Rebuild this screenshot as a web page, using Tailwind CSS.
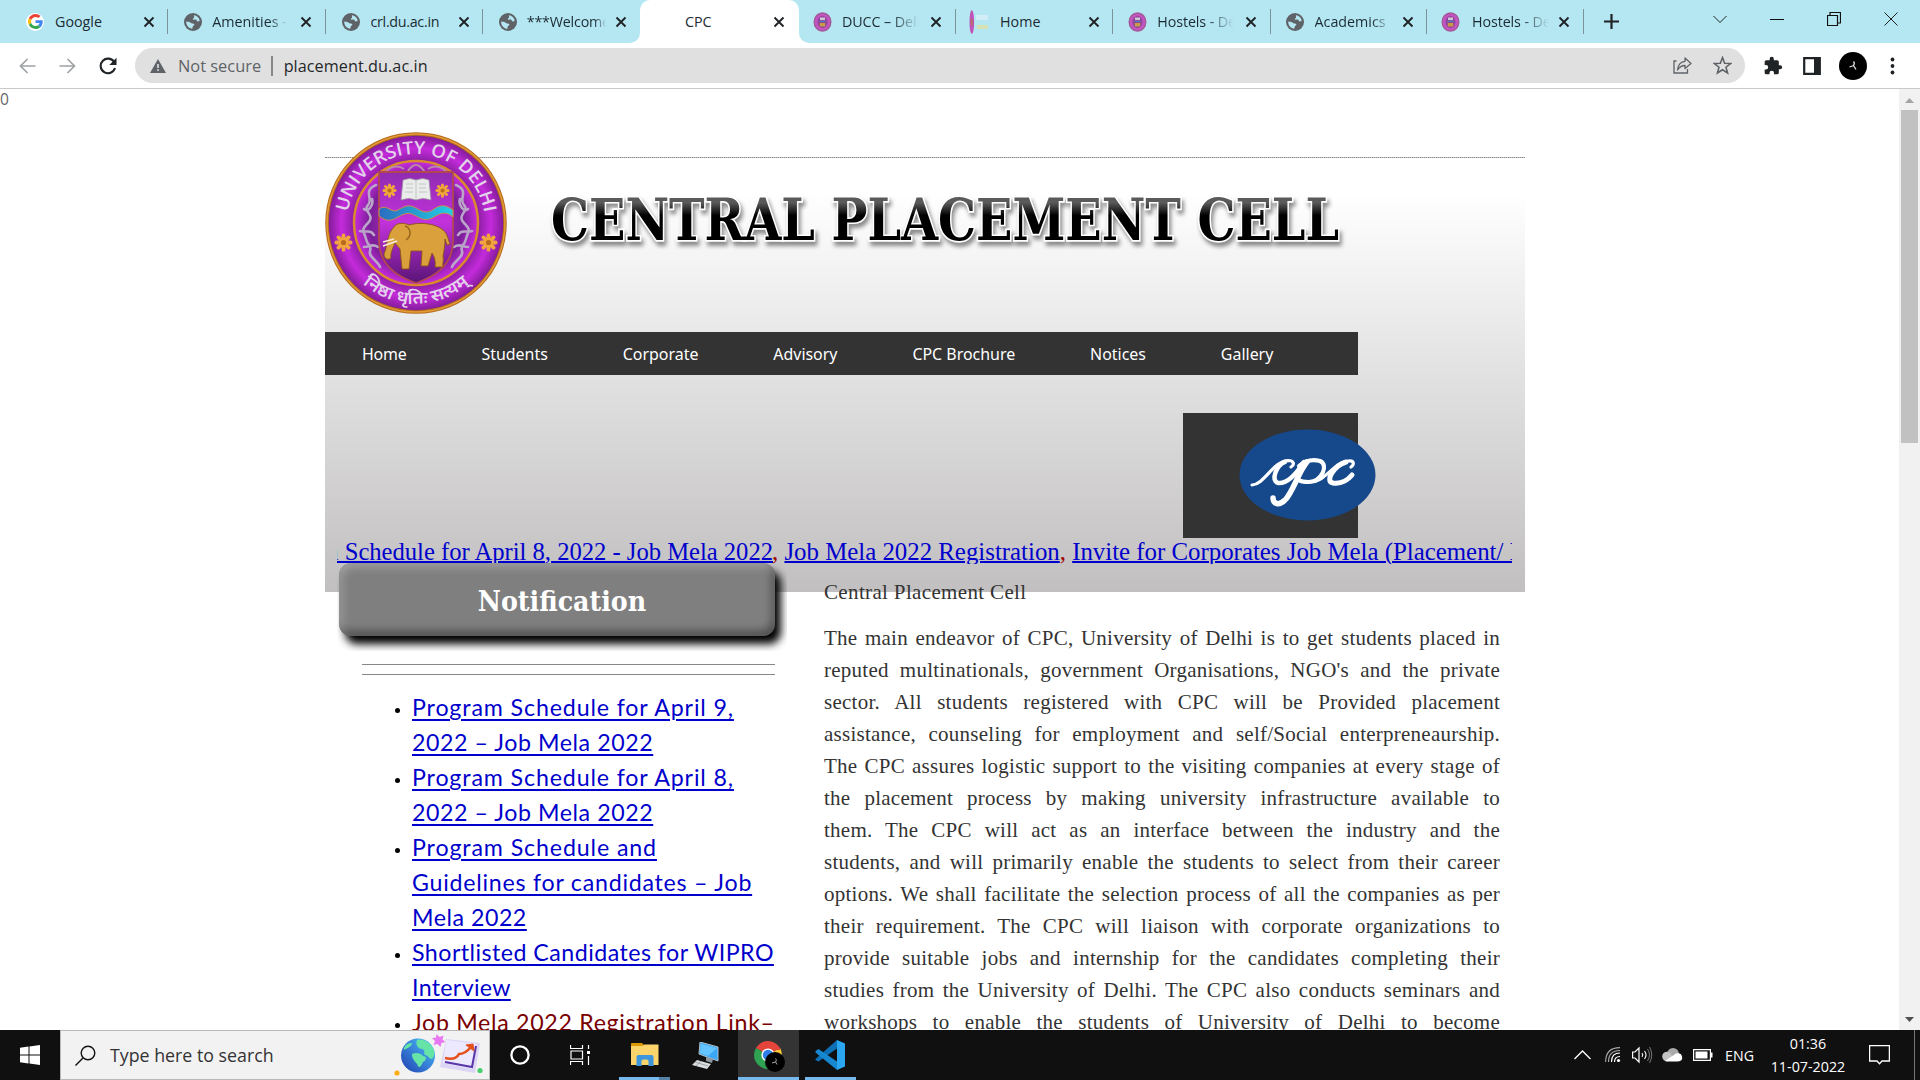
<!DOCTYPE html>
<html lang="en">
<head>
<meta charset="utf-8">
<title>CPC</title>
<script src="https://cdn.jsdelivr.net/npm/@tailwindcss/browser@4"></script>
</head>
<body class="w-[1920px] h-[1080px] overflow-hidden flex flex-col bg-white font-['Open_Sans',sans-serif]">

<!-- shared symbols -->
<svg class="hidden">
  <symbol id="x" viewBox="0 0 12 12"><path d="M1.500 1.500l9 9M10.500 1.500l-9 9" stroke="#1f2326" stroke-width="1.900" fill="none"/></symbol>
  <symbol id="globe" viewBox="0 0 18 18"><circle cx="9" cy="9" r="9" fill="#5f6368"/><path d="M10 2.200c2.800.4 5.200 2.500 5.700 5.300-.7 1-1.700 1.200-2.400.8-.8-.4-.6-1.400-1.500-1.700-.9-.2-1.500.4-2.400.1-.8-.3-.6-1.200 0-1.500.8-.4.9-.7.700-1.300-.1-.6-.3-1.100-.1-1.700zM2.200 8.500c1.800.2 3.400.3 4.800 1.500.7.600 1.700.5 2.600.7 1 .3.900 1.300.2 1.900-.7.500-1.100.7-1.200 1.500l-.2 1.700C5 15.500 2 12.500 2.200 8.500z" fill="#b5e7f2"/></symbol>
  <symbol id="du" viewBox="0 0 18 20"><ellipse cx="9" cy="10" rx="9" ry="9.800" fill="#a15a94"/><ellipse cx="9" cy="10" rx="7.800" ry="8.600" fill="#c254c0"/><ellipse cx="9" cy="10" rx="5" ry="6" fill="#8f4599"/><path d="M6.500 5.500h5v2.500h-5z" fill="#d5c3d8"/><path d="M6 8.700h6v1.200H6z" fill="#4b86bd"/><path d="M6.300 11h5.400v3.500H6.300z" fill="#c99a46"/></symbol>
  <symbol id="flower" viewBox="-8 -8 16 16"><g stroke="#f0a63c" stroke-width="3.200" stroke-linecap="round"><path d="M0-6V6M-6 0H6M-4.300-4.300L4.300 4.300M4.300-4.300L-4.300 4.300"/></g><circle r="2.200" fill="#b86a1e"/></symbol>
</svg>

<!-- tab strip -->
<div class="h-[43px] shrink-0 bg-[#b5e7f2] flex items-center pl-[11px] text-[14.300px] text-[#1c2b33]">
  <div class="w-[157.250px] h-full flex items-center pl-[15px] relative">
    <span class="size-[18px] rounded-full bg-white flex items-center justify-center"><svg class="size-[15px]" viewBox="0 0 48 48"><path fill="#EA4335" d="M24 9.500c3.540 0 6.710 1.220 9.210 3.600l6.850-6.850C35.900 2.380 30.470 0 24 0 14.620 0 6.510 5.380 2.560 13.220l7.980 6.190C12.430 13.720 17.740 9.500 24 9.500z"/><path fill="#4285F4" d="M46.980 24.550c0-1.570-.15-3.090-.38-4.550H24v9.020h12.940c-.58 2.960-2.260 5.480-4.780 7.180l7.730 6c4.510-4.180 7.090-10.360 7.090-17.650z"/><path fill="#FBBC05" d="M10.530 28.590c-.48-1.450-.76-2.990-.76-4.590s.27-3.140.76-4.590l-7.980-6.190C.92 16.460 0 20.120 0 24c0 3.880.92 7.540 2.560 10.780l7.970-6.190z"/><path fill="#34A853" d="M24 48c6.480 0 11.930-2.130 15.890-5.810l-7.730-6c-2.150 1.450-4.920 2.300-8.160 2.300-6.260 0-11.570-4.220-13.470-9.910l-7.980 6.190C6.510 42.620 14.620 48 24 48z"/></svg></span>
    <span class="ml-[11px] w-[76px] whitespace-nowrap overflow-hidden">Google</span><svg class="ml-[12px] size-3"><use href="#x"/></svg>
    <i class="absolute right-0 top-[9px] w-px h-[25px] bg-[#7c939b]"></i>
  </div>
  <div class="w-[157.250px] h-full flex items-center pl-4 relative">
    <svg class="size-[18px]"><use href="#globe"/></svg>
    <span class="ml-[10px] w-[76px] whitespace-nowrap overflow-hidden mask-r-from-75% mask-r-to-100%">Amenities - D</span><svg class="ml-[12px] size-3"><use href="#x"/></svg>
    <i class="absolute right-0 top-[9px] w-px h-[25px] bg-[#7c939b]"></i>
  </div>
  <div class="w-[157.250px] h-full flex items-center pl-4 relative">
    <svg class="size-[18px]"><use href="#globe"/></svg>
    <span class="ml-[11px] w-[76px] whitespace-nowrap overflow-hidden tracking-[-0.300px]">crl.du.ac.in</span><svg class="ml-[11px] size-3"><use href="#x"/></svg>
    <i class="absolute right-0 top-[9px] w-px h-[25px] bg-[#7c939b]"></i>
  </div>
  <div class="w-[157.250px] h-full flex items-center pl-4">
    <svg class="size-[18px]"><use href="#globe"/></svg>
    <span class="ml-[10px] w-[79px] whitespace-nowrap overflow-hidden mask-r-from-85% mask-r-to-100% tracking-[-0.200px]">***Welcome t</span><svg class="ml-[9px] size-3"><use href="#x"/></svg>
  </div>
  <div class="w-[159px] h-full flex items-center pl-[45px] relative bg-white rounded-t-[10px]">
    <span class="w-[76px]">CPC</span><svg class="ml-[12px] size-3"><use href="#x"/></svg>
    <i class="absolute -left-[10px] bottom-0 size-[10px] bg-white"></i><i class="absolute -left-[10px] bottom-0 size-[10px] bg-[#b5e7f2] rounded-br-[10px]"></i>
    <i class="absolute -right-[10px] bottom-0 size-[10px] bg-white"></i><i class="absolute -right-[10px] bottom-0 size-[10px] bg-[#b5e7f2] rounded-bl-[10px]"></i>
  </div>
  <div class="w-[157px] h-full flex items-center pl-[14px] relative">
    <svg class="w-[19px] h-[20px]"><use href="#du"/></svg>
    <span class="ml-[10px] w-[77px] whitespace-nowrap overflow-hidden mask-r-from-65% mask-r-to-100% tracking-[-0.100px]">DUCC – Delh</span><svg class="ml-[11px] size-3"><use href="#x"/></svg>
    <i class="absolute right-0 top-[9px] w-px h-[25px] bg-[#7c939b]"></i>
  </div>
  <div class="w-[157.250px] h-full flex items-center pl-[13px] relative">
    <svg class="w-[20px] h-[24px]" viewBox="0 0 20 24"><ellipse cx="2.800" cy="12" rx="2.300" ry="12" fill="#c052b8"/><path d="M2 9h1.500v6H2z" fill="#b07a50"/><path d="M7 5h12v5H7z" fill="#d3edf6"/><path d="M8 15h11v4H8z" fill="#d8e3b4"/></svg>
    <span class="ml-[11px] w-[76px] whitespace-nowrap overflow-hidden">Home</span><svg class="ml-[12px] size-3"><use href="#x"/></svg>
    <i class="absolute right-0 top-[9px] w-px h-[25px] bg-[#7c939b]"></i>
  </div>
  <div class="w-[157.250px] h-full flex items-center pl-[15px] relative">
    <svg class="w-[19px] h-[20px]"><use href="#du"/></svg>
    <span class="ml-[10px] w-[77px] whitespace-nowrap overflow-hidden mask-r-from-65% mask-r-to-100% tracking-[-0.100px]">Hostels - Delh</span><svg class="ml-[11px] size-3"><use href="#x"/></svg>
    <i class="absolute right-0 top-[9px] w-px h-[25px] bg-[#7c939b]"></i>
  </div>
  <div class="w-[156.500px] h-full flex items-center pl-[15px] relative">
    <svg class="size-[18px]"><use href="#globe"/></svg>
    <span class="ml-[11px] w-[76px] whitespace-nowrap overflow-hidden mask-r-from-75% mask-r-to-100%">Academics -</span><svg class="ml-[11px] size-3"><use href="#x"/></svg>
    <i class="absolute right-0 top-[9px] w-px h-[25px] bg-[#7c939b]"></i>
  </div>
  <div class="w-[157px] h-full flex items-center pl-[14px] relative">
    <svg class="w-[19px] h-[20px]"><use href="#du"/></svg>
    <span class="ml-[12px] w-[77px] whitespace-nowrap overflow-hidden mask-r-from-65% mask-r-to-100% tracking-[-0.100px]">Hostels - Delh</span><svg class="ml-[9px] size-3"><use href="#x"/></svg>
    <i class="absolute right-0 top-[9px] w-px h-[25px] bg-[#7c939b]"></i>
  </div>
  <svg class="ml-[20px] w-[15px] h-[15px]" viewBox="0 0 15 15"><path d="M7.500 0v15M0 7.500h15" stroke="#1f2326" stroke-width="2.200"/></svg>
  <div class="ml-auto flex items-center gap-[43px] pr-[22px] h-full pb-[6px]">
    <svg class="w-[14px] h-[14px]" viewBox="0 0 14 14"><path d="M.5 4L7 10.500 13.500 4" stroke="#222" fill="none"/></svg>
    <svg class="w-[14px] h-[14px]" viewBox="0 0 14 14"><path d="M0 7.500h14" stroke="#111"/></svg>
    <svg class="w-[14px] h-[14px]" viewBox="0 0 14 14"><path d="M.5 3.500h10v10H.5zM3 3V.5h10.500V11H11" stroke="#111" fill="none" stroke-width="1.200"/></svg>
    <svg class="w-[14px] h-[14px]" viewBox="0 0 14 14"><path d="M.5.5l13 13M13.500.5l-13 13" stroke="#222"/></svg>
  </div>
</div>

<!-- toolbar -->
<div class="h-[46px] shrink-0 border-b border-[#c8cacc] flex items-center pl-[19px] pr-[25px] text-base">
  <svg class="w-[17px] h-[16px]" viewBox="0 0 17 16"><path d="M16.500 8H1.500M8.500 1L1.500 8l7 7" stroke="#9fa2a5" stroke-width="1.700" fill="none"/></svg>
  <svg class="ml-[23px] w-[17px] h-[16px]" viewBox="0 0 17 16"><path d="M.5 8h15M8.500 1l7 7-7 7" stroke="#9fa2a5" stroke-width="1.700" fill="none"/></svg>
  <svg class="ml-[23px] w-[18px] h-[18px]" viewBox="0 0 18 18"><path d="M15.300 5.200A7.300 7.300 0 1 0 16 11" stroke="#1f2326" stroke-width="2.100" fill="none"/><path d="M17.500.8v7.200h-7.200z" fill="#1f2326"/></svg>
  <div class="ml-[18px] w-[1610px] h-[35px] rounded-full bg-[#e0e0e0] flex items-center pl-[15px] pr-[13px] text-[#5f6368]">
    <svg class="w-[16px] h-[14px]" viewBox="0 0 16 14"><path d="M8 0l8 14H0z" fill="#5f6368"/><path d="M7.200 5h1.600v4H7.200zM7.200 10.300h1.600v1.600H7.200z" fill="#e0e0e0"/></svg>
    <span class="ml-3 text-[16.400px] pt-px">Not secure</span>
    <i class="ml-[10px] w-[1.500px] h-[20px] bg-[#85888b]"></i>
    <span class="ml-[11px] text-[#24272a] text-[16.200px] tracking-[0.060px] pt-px">placement.du.ac.in</span>
    <svg class="ml-auto w-[19px] h-[17px]" viewBox="0 0 19 17"><path d="M3.500 4H1v12h13.500v-4" stroke="#5f6368" stroke-width="1.300" fill="none"/><path d="M12 1l6 5.500-6 5V8.500C8.500 8.500 6.500 10 4.500 13c.5-5 3-8.300 7.500-8.700z" stroke="#5f6368" stroke-width="1.300" fill="none" stroke-linejoin="round"/></svg>
    <svg class="ml-[21px] w-[19px] h-[19px]" viewBox="0 0 24 24"><path d="M12 2l2.700 7.100 7.600.4-5.900 4.700 2 7.300L12 17.400l-6.400 4.100 2-7.300L1.700 9.500l7.600-.4z" fill="none" stroke="#5f6368" stroke-width="2"/></svg>
  </div>
  <svg class="ml-[18px] w-[20px] h-[20px]" viewBox="0 0 24 24"><path d="M20.500 11H19V7a2 2 0 0 0-2-2h-4V3.500a2.500 2.500 0 0 0-5 0V5H4a2 2 0 0 0-2 2v3.800h1.500a2.700 2.700 0 0 1 0 5.400H2V20a2 2 0 0 0 2 2h3.800v-1.500a2.700 2.700 0 0 1 5.400 0V22H17a2 2 0 0 0 2-2v-4h1.500a2.500 2.500 0 0 0 0-5z" fill="#1f2326"/></svg>
  <svg class="ml-[20px] w-[18px] h-[18px]" viewBox="0 0 18 18"><path d="M1.200 1.200h15.600v15.600H1.200z" fill="none" stroke="#1f2326" stroke-width="2.200"/><path d="M11 1h6v16h-6z" fill="#1f2326"/></svg>
  <svg class="ml-[18px] w-[28px] h-[28px]" viewBox="0 0 28 28"><circle cx="14" cy="14" r="14"/><path d="M14.500 9.500c1 1 1 2.500 0 4L17 17.500M14.500 13.500L10.500 15" stroke="#ddd" stroke-width="1.300" fill="none"/></svg>
  <svg class="ml-auto w-[5px] h-[18px]" viewBox="0 0 5 18"><g fill="#1f2326"><circle cx="2.500" cy="2.500" r="1.900"/><circle cx="2.500" cy="9" r="1.900"/><circle cx="2.500" cy="15.500" r="1.900"/></g></svg>
</div>

<!-- page viewport -->
<div class="h-[941px] shrink-0 flex overflow-hidden">
  <main class="w-[1899px] relative">
    <span class="absolute left-0 top-0 text-[15.500px] leading-[20px] text-[#666]">0</span>
    <div class="w-[1200px] ml-[325px] pt-[68px]">
      <header class="h-[435px] border-t border-dotted border-[#8a8a8a] bg-linear-to-b from-white from-8% to-[#c1bfc0] relative">
        <div class="h-[174px] flex">
          <svg class="-mt-[27px] -ml-px w-[184px] h-[184px] shrink-0 overflow-visible" viewBox="-92 -92 184 184">
            <defs>
              <radialGradient id="g1"><stop offset=".66" stop-color="#7d1b96"/><stop offset=".84" stop-color="#c42bdb"/><stop offset="1" stop-color="#7b1a92"/></radialGradient>
              <radialGradient id="g2"><stop offset="0" stop-color="#d63be8"/><stop offset=".75" stop-color="#7a1f98"/><stop offset="1" stop-color="#c92bdf"/></radialGradient>
              <linearGradient id="g3" x2="0" y2="1"><stop stop-color="#8f2bb0"/><stop offset=".45" stop-color="#c332dc"/><stop offset="1" stop-color="#5a1477"/></linearGradient>
              <linearGradient id="g4"><stop stop-color="#2b6cc0"/><stop offset="1" stop-color="#22cfe4"/></linearGradient>
              <path id="arcTop" d="M-69 0A69 69 0 0 1 69 0"/>
              <path id="arcBot" d="M-66 46A80 80 0 0 0 66 46"/>
            </defs>
            <circle r="89" fill="url(#g1)" stroke="#b46b1e" stroke-width="3.500"/>
            <circle r="89" fill="none" stroke="#e39a35" stroke-width="1.500"/>
            <circle r="62" fill="url(#g2)" stroke="#d98a2c" stroke-width="2.500"/>
            <g fill="none" stroke="#b9a5c8" stroke-width="2.600" stroke-linecap="round"><path d="M-40-38c-14 6-2 14-8 20s8 10 0 18-4 8-2 16 6 6 4 12 8 10 10 16M-52-14c4 4 10-4 8-10M-56 8c6 2 10-2 14 4M-52 24c6 0 8-4 14 0"/><path d="M40-38c14 6 2 14 8 20s-8 10 0 18 4 8 2 16-6 6-4 12-8 10-10 16M52-14c-4 4-10-4-8-10M56 8c-6 2-10-2-14 4M52 24c-6 0-8-4-14 0"/></g>
            <path d="M-30-52q10-8 18-2M30-52q-10-8-18-2M-8-52q8-12 16 0q-8 6-16 0" fill="none" stroke="#b98aa8" stroke-width="2"/>
            <path d="M-37-51H37V18C37 42 18 54 0 60C-18 54-37 42-37 18z" fill="url(#g3)" stroke="#b3474f" stroke-width="1.800"/>
            <path d="M-37-14c8-6 12 5 19 1s11-6 18-2 11 6 18 1 12-4 19 1v7c-7-6-12-4-19 0s-11 3-18-1-11-3-18 1-11 5-19-1z" fill="url(#g4)" stroke="#cf8a4a" stroke-width="1"/>
            <path d="M-15-23l2-20q7-3 13 0q7-3 13 0l2 20q-8-3-15 0q-7-3-15 0z" fill="#e9ecea" stroke="#9a8aa0" stroke-width=".8"/><path d="M0-43V-23M-10-39h7M-10-35h7M-11-31h8M3-39h7M3-35h7M3-31h8" stroke="#b9bcbc" stroke-width=".8"/>
            <use href="#flower" x="-34" y="-40" width="15" height="15"/><use href="#flower" x="19" y="-40" width="15" height="15"/>
            <use href="#flower" x="-82" y="10" width="19" height="19"/><use href="#flower" x="63" y="10" width="19" height="19"/>
            <path d="M-22 4c3-5 11-4 15-2c10-3 26-2 34 5c5 4 5 10 7 14l-3 1-2-6c0 7-1 12-2 17 1 4-1 11 0 11h-8c1-6-1-11-3-14l-4 13h-7l1-15h-11l-2 18h-7l-2-20-5-6c-2 5-5 10-4 15-4 3-7 0-7-4 3-6 2-10 4-15 1-5 3-9 6-12z" fill="#d9a03c" stroke="#8a5518" stroke-width=".9"/>
            <path d="M-11 3c6 2 7 10 1 14" fill="none" stroke="#9a6820" stroke-width="1.500"/><path d="M-33 23l14-5M-33 19l11-3" stroke="#f3ead8" stroke-width="1.800"/>
            <text class="font-['Open_Sans',sans-serif] font-semibold" font-size="18" fill="#e2d3ea"><textPath href="#arcTop" startOffset="11" textLength="195" lengthAdjust="spacingAndGlyphs">UNIVERSITY OF DELHI</textPath></text>
            <text class="font-['Noto_Sans',sans-serif] font-semibold" font-size="17" fill="#e2d3ea"><textPath href="#arcBot" startOffset="50%" text-anchor="middle" textLength="116" lengthAdjust="spacingAndGlyphs">निष्ठा धृतिः सत्यम्</textPath></text>
          </svg>
          <svg class="ml-[31px] mt-[19px] w-[820px] h-[80px]" viewBox="0 0 820 80">
            <defs><linearGradient id="t" x2="0" y2="1"><stop offset=".25" stop-color="#5a5a5a"/><stop offset=".44" stop-color="#000"/></linearGradient></defs>
            <g class="drop-shadow-[2px_4px_2px_rgba(0,0,0,0.45)]"><text transform="translate(12 63) scale(1 1.100)" font-size="53" textLength="788" lengthAdjust="spacingAndGlyphs" class="font-['DejaVu_Serif_Condensed','DejaVu_Serif',serif] font-bold" fill="url(#t)" stroke="#fff" stroke-width="3" paint-order="stroke">CENTRAL PLACEMENT CELL</text></g>
          </svg>
        </div>
        <nav class="w-[1033px] h-[43px] bg-[#333] flex items-center pl-[37px] pt-[2px] gap-[74.900px] text-white text-[15.950px] font-['Noto_Sans',sans-serif] whitespace-nowrap">
          <a class="tracking-[-0.200px]">Home</a><a>Students</a><a>Corporate</a><a>Advisory</a><a>CPC Brochure</a><a>Notices</a><a>Gallery</a>
        </nav>
        <div class="mt-[38px] ml-[858px] w-[175px] h-[125px] bg-[#333] relative">
          <svg class="absolute left-[56px] top-[16px] w-[137px] h-[92px]" viewBox="0 0 137 92"><ellipse cx="68.500" cy="46" rx="68" ry="45.500" fill="#15498b"/>
            <g fill="none" stroke="#fff" stroke-linecap="round" stroke-linejoin="round"><path d="M13 56C26 55 34 32 49 31.500c6 0 7 4 3 6.500" stroke-width="3.200"/><path d="M46 33C38 36 31 51 39 54c8 1 17-7 26-21" stroke-width="4.500"/><path d="M68 33C60 42 53 65 46 71c-6 6-12 4-12-2" stroke-width="5.500"/><path d="M60 37c6-5 13-7 21-5 9 4 2 20-11 21-5 0-8 0-10-2" stroke-width="4.200"/><path d="M72 53C86 53 94 34 109 32c7-1 6 4 3 6" stroke-width="3.200"/><path d="M107 33C96 36 85 52 94 54c7 1 14-2 19-8" stroke-width="5"/></g></svg>
        </div>
        <div class="ml-[12px] w-[1175px] h-[26px] overflow-hidden relative whitespace-nowrap text-[#0000cc] font-['Liberation_Serif',serif]">
          <div class="absolute right-[739px] top-0 leading-[27px] text-[24.600px]"><a class="underline decoration-2 underline-offset-1">Program Schedule for April 8, 2022 - Job Mela 2022</a></div>
          <div class="absolute left-[435px] top-0 leading-[27px] text-[24.850px]"><span class="text-[#a00000]">, </span><a class="underline decoration-2 underline-offset-1">Job Mela 2022 Registration</a><span class="text-[#a00000]">, </span><a class="underline decoration-2 underline-offset-1">Invite for Corporates Job Mela (Placement/ Internship)</a></div>
        </div>
      </header>

      <div class="-mt-[29px] flex relative">
        <section class="w-[450px] ml-[12px] shrink-0">
          <div class="h-[88px] overflow-hidden pl-[2px]">
            <h2 class="w-[436px] h-[73px] rounded-[12px] bg-[#7f7f7f] shadow-[6px_8px_8px_0px_#000,inset_3px_4px_9px_rgba(255,255,255,0.28),inset_-3px_-5px_9px_rgba(0,0,0,0.4)] text-center text-white font-bold text-[28.200px] leading-[77px] pl-[10px] font-['DejaVu_Serif_Condensed','DejaVu_Serif',serif]">Notification</h2>
          </div>
          <div class="ml-[25px] mt-[13px] w-[413px] h-[11px] border-t border-b border-[#888]"></div>
          <ul class="mt-[15px] ml-[75px] w-[380px] list-disc text-[23.200px] leading-[35px] text-[#0000cc] font-['Lato',sans-serif] whitespace-nowrap marker:text-black marker:text-[15px]">
            <li><a class="underline decoration-2 underline-offset-3"><span class="tracking-[0.870px]">Program Schedule for April 9,</span><br><span class="tracking-[0.560px]">2022 – Job Mela 2022</span></a></li>
            <li><a class="underline decoration-2 underline-offset-3"><span class="tracking-[0.870px]">Program Schedule for April 8,</span><br><span class="tracking-[0.560px]">2022 – Job Mela 2022</span></a></li>
            <li><a class="underline decoration-2 underline-offset-3"><span class="tracking-[0.880px]">Program Schedule and</span><br><span class="tracking-[0.760px]">Guidelines for candidates – Job</span><br><span class="tracking-[0.520px]">Mela 2022</span></a></li>
            <li><a class="underline decoration-2 underline-offset-3"><span class="tracking-[0.470px]">Shortlisted Candidates for WIPRO</span><br><span class="tracking-[0.320px]">Interview</span></a></li>
            <li class="text-[#7a0000] tracking-[0.690px]">Job Mela 2022 Registration Link–</li>
          </ul>
        </section>
        <section class="ml-[37px] mt-[13px] w-[676px] text-[21px] leading-[32px] text-[#333] font-['Liberation_Serif',serif] tracking-[0.250px]">
          <p class="tracking-[0.350px]">Central Placement Cell</p>
          <div class="mt-[14px] whitespace-nowrap [&>p]:[text-align-last:justify]">
            <p>The main endeavor of CPC, University of Delhi is to get students placed in</p>
            <p>reputed multinationals, government Organisations, NGO's and the private</p>
            <p>sector. All students registered with CPC will be Provided placement</p>
            <p>assistance, counseling for employment and self/Social enterpreneaurship.</p>
            <p>The CPC assures logistic support to the visiting companies at every stage of</p>
            <p>the placement process by making university infrastructure available to</p>
            <p>them. The CPC will act as an interface between the industry and the</p>
            <p>students, and will primarily enable the students to select from their career</p>
            <p>options. We shall facilitate the selection process of all the companies as per</p>
            <p>their requirement. The CPC will liaison with corporate organizations to</p>
            <p>provide suitable jobs and internship for the candidates completing their</p>
            <p>studies from the University of Delhi. The CPC also conducts seminars and</p>
            <p>workshops to enable the students of University of Delhi to become</p>
          </div>
        </section>
      </div>
    </div>
  </main>
  <aside class="w-[21px] bg-[#f1f1f1] flex flex-col items-center">
    <svg class="mt-[9px] w-[9px] h-[5px]" viewBox="0 0 9 5"><path d="M4.500 0L9 5H0z" fill="#a3a3a3"/></svg>
    <div class="mt-[7px] w-[17px] h-[333px] bg-[#c1c1c1]"></div>
    <svg class="mt-auto mb-[8px] w-[9px] h-[5px]" viewBox="0 0 9 5"><path d="M4.500 5L9 0H0z" fill="#505050"/></svg>
  </aside>
</div>

<!-- taskbar -->
<footer class="h-[50px] shrink-0 bg-[#101010] flex items-center text-white">
  <div class="w-[60px] flex justify-center"><svg class="w-[20px] h-[20px]" viewBox="0 0 20 20"><path d="M0 2.800L8.500 1.600V9.500H0zM9.500 1.400L20 0V9.500H9.500zM0 10.500H8.500V18.400L0 17.200zM9.500 10.500H20V20L9.500 18.600z" fill="#fff"/></svg></div>
  <div class="w-[430px] h-[50px] bg-[#f2f2f2] border border-[#b8b8b8] flex items-center pl-[14px] text-[#333]">
    <svg class="w-[21px] h-[21px]" viewBox="0 0 21 21"><circle cx="13" cy="8" r="6.800" fill="none" stroke="#111" stroke-width="1.400"/><path d="M8 13L.5 20.500" stroke="#111" stroke-width="1.400"/></svg>
    <span class="ml-[14px] text-[17.800px] leading-none pt-px">Type here to search</span>
    <svg class="ml-auto mr-[4px] w-[92px] h-[46px]" viewBox="0 0 92 46"><defs><linearGradient id="gl" x1="1" x2="0" y2="1"><stop stop-color="#4fc3ff"/><stop offset="1" stop-color="#1f3fb0"/></linearGradient></defs>
      <circle cx="25" cy="23.500" r="17" fill="url(#gl)"/><path d="M24 8c8-2 14 4 17 10 1 4 0 7-2 9-3 0-4-4-7-4-2-2 1-5-3-6-4 0-7-5-5-9zM19 22c4-2 9-1 11 2 4 0 4 4 0 6-2 5-4 6-5 4-1-4-6-5-6-12zM11 16c2-4 5-5 8-5 0 4-5 5-8 7z" fill="#66e3a6"/>
      <path d="M43.500 2l3 3 4-1.500-1 4 3 2.500-4 1-1 4-3-3-4 1 1.500-4-3-3 4-.5z" fill="#e879f2"/><circle cx="4" cy="41" r="2.600" fill="#fbae17"/>
      <path d="M53 7l34 4-5 30-35-6z" fill="#dcd5f5"/><path d="M53 8l31 4-5 25-29-6z" fill="#ece9ff"/><path d="M52 30l27 5 4-21" fill="none" stroke="#5a36a8" stroke-width="2"/><path d="M52 26c8 2 12 0 14-4 3 0 7-1 12-7" fill="none" stroke="#e4501c" stroke-width="2.600"/><path d="M73 13l7-1 1 7z" stroke="#e4501c" fill="#e4501c"/><circle cx="87" cy="38.500" r="2.600" fill="#46cf6d"/></svg>
  </div>
  <div class="w-[60px] flex justify-center"><svg class="w-[20px] h-[20px]" viewBox="0 0 20 20"><circle cx="10" cy="10" r="8.600" fill="none" stroke="#fff" stroke-width="2.300"/></svg></div>
  <div class="w-[60px] flex justify-center"><svg class="w-[21px] h-[20px]" viewBox="0 0 21 20"><path d="M.5 0v3.500h12V0M.5 20v-3.500h12V20M1 6h11.500v8H1zM18.500 0v4M18.500 11v9" fill="none" stroke="#fff" stroke-width="1.200"/><path d="M17 6h3v3h-3z" fill="#fff"/></svg></div>
  <div class="ml-[9px] w-[51px] h-full flex flex-col items-center">
    <svg class="mt-[12px] w-[28px] h-[25px]" viewBox="0 0 28 25"><path d="M0 1.500Q0 1 .8 1H11l3 3H0z" fill="#d99a05"/><path d="M0 4h11.500l2-1.500H27.500V23H0z" fill="#fbd46c"/><path d="M5.500 24v-9q0-2 2-2h13q2 0 2 2v9h-5v-5q0-1.500-2-1.500h-3q-2 0-2 1.500v5z" fill="#3f95dc"/></svg>
    <div class="mt-auto w-full h-[3px] flex"><i class="w-[40px] bg-[#76b9ed]"></i><i class="flex-1 bg-[#5583a8]"></i></div>
  </div>
  <div class="w-[68px] flex justify-center pl-[2px]"><svg class="w-[28px] h-[27px]" viewBox="0 0 28 27"><path d="M9 0l18 5v14L8 12z" fill="#3aa8f5" stroke="#b6c0c8" stroke-width="1"/><path d="M10 2l16 4-9 8-8-3z" fill="#65c3ff"/><path d="M15 15l7 2-1 4-6-2z" fill="#8e979e"/><path d="M6 18l14 4-4 5-15-4z" fill="#d9dde0"/><path d="M4 20l13 4M10 19l-5 5" stroke="#8d949a" stroke-width=".8"/></svg></div>
  <div class="w-[61px] h-full bg-[#343434] flex flex-col items-center">
    <svg class="mt-[10px] w-[32px] h-[32px]" viewBox="0 0 32 32"><g transform="translate(15 15)"><path d="M0 0L-12.100-7A14 14 0 0 1 12.100-7z" fill="#e5443a"/><path d="M0 0L-12.100-7A14 14 0 0 0 0 14L6 3.500z" fill="#2fa352"/><path d="M0 0L12.100-7A14 14 0 0 1 0 14z" fill="#fcc934"/><path d="M0-7H12.100V-5H0z" fill="#e5443a"/><circle r="6.600" fill="#fff"/><circle r="5.200" fill="#2f7de9"/></g><circle cx="22" cy="22" r="10" fill="#000"/><path d="M22.500 18.500c1 1 1 2 0 3.500l1.500 2.500M22 22l-3 1" stroke="#aaa" fill="none"/></svg>
    <i class="mt-auto w-full h-[3px] bg-[#76b9ed]"></i>
  </div>
  <div class="ml-[6px] w-[51px] h-full flex flex-col items-center">
    <svg class="mt-[10px] mr-[2px] w-[30px] h-[30px]" viewBox="0 0 30 30"><path d="M.5 19L22 0v8.500L3.500 21.500 .5 20z" fill="#0d6fb5"/><path d="M.5 11L3.500 9 22 21.500V30L.5 12.500z" fill="#1787cf"/><path d="M22 0l8 3.500v23L22 30z" fill="#2aa7f0"/></svg>
    <i class="mt-auto w-full h-[3px] bg-[#76b9ed]"></i>
  </div>
  <div class="ml-auto flex items-center h-full">
    <svg class="w-[17px] h-[10px]" viewBox="0 0 17 10"><path d="M.5 9L8.500 1l8 8" fill="none" stroke="#fff" stroke-width="1.300"/></svg>
    <svg class="ml-[14px] w-[16px] h-[16px]" viewBox="0 0 16 16"><circle cx="13.500" cy="13.500" r="1.600" fill="#fff"/><path d="M9.500 15Q9.500 9.500 15 9.500M6.500 15Q6.500 6 15 6" fill="none" stroke="#fff" stroke-width="1.200"/><path d="M3.500 15Q3.500 3.500 15 3.500M.6 15Q.6.600 15 .6" fill="none" stroke="#aaa" stroke-width="1.100"/></svg>
    <svg class="ml-[11px] w-[21px] h-[18px]" viewBox="0 0 21 18"><path d="M.6 6v6H3l4 4V2L3 6z" fill="none" stroke="#fff" stroke-width="1.200"/><path d="M10 7q1.500 2 0 4M12.500 5q3 4 0 8" fill="none" stroke="#fff" stroke-width="1.100"/><path d="M15.500 3q4 6 0 12M17.500 1q4.500 8 0 16" fill="none" stroke="#777"/></svg>
    <svg class="ml-[9px] w-[21px] h-[14px]" viewBox="0 0 21 14"><circle cx="11" cy="6" r="6" fill="#aaa"/><circle cx="5" cy="8.500" r="4.800" fill="#c4c4c4"/><path d="M3 13L14 5.500q5-1.500 6 3t-4 5H5z" fill="#fff"/></svg>
    <svg class="ml-[10px] w-[20px] h-[12px]" viewBox="0 0 20 12"><path d="M.6.6h16.800v10.800H.6z" fill="none" stroke="#fff" stroke-width="1.200"/><path d="M2.500 2.500h12v7h-12zM18 3.500h1.500v5H18z" fill="#fff"/></svg>
    <span class="ml-[12px] text-[14.200px] pt-px">ENG</span>
    <div class="ml-[14px] w-[80px] text-center text-[14.300px] leading-[23px] pb-px"><div>01:36</div><div>11-07-2022</div></div>
    <svg class="ml-[21px] w-[21px] h-[20px]" viewBox="0 0 21 20"><path d="M.6.6h19.800v15.400H13L10.500 18.700 8 16H.6z" fill="none" stroke="#fff" stroke-width="1.300"/></svg>
    <i class="ml-[24px] w-px h-full bg-[#777]"></i><i class="w-[5px]"></i>
  </div>
</footer>
</body>
</html>
